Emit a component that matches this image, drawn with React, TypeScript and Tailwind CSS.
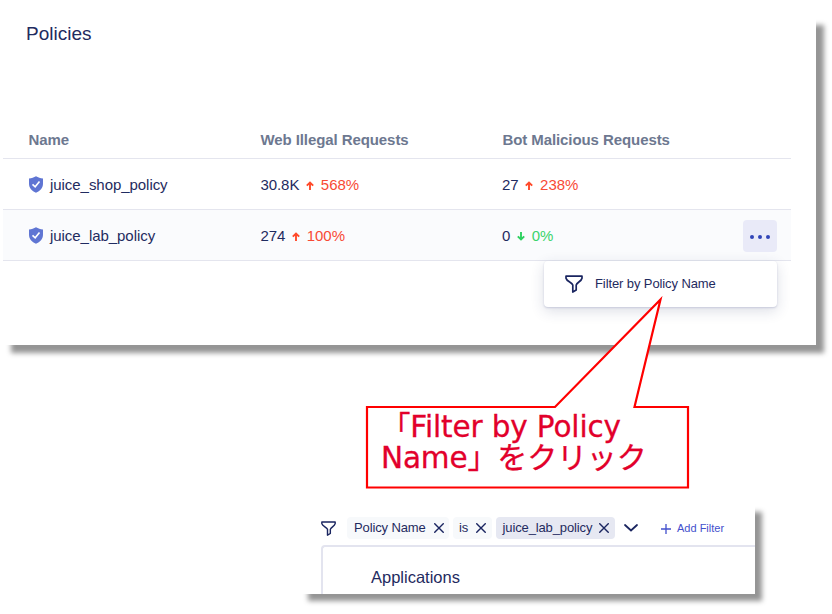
import React from "react";

function FunnelIcon({ className }: { className: string }) {
  return (
    <svg className={className} viewBox="0 0 18 18" fill="none" stroke="#1a2560" strokeWidth="1.7" strokeLinejoin="round" strokeLinecap="round">
      <path d="M1 1.2H17V3.2C16.300 6.400 12 7.400 11.200 10V15L7.800 17V10C6.800 7.400 1.700 6.400 1 3.2Z" />
    </svg>
  );
}

function ShieldIcon() {
  return (
    <svg className="mb-px h-[17px] w-4 shrink-0" viewBox="0 0 16 18">
      <path d="M8 0.3C10.3 1.7 12.5 2.4 15.4 2.6V8.3C15.4 12.9 12.3 16.1 8 17.7C3.7 16.1 0.6 12.9 0.6 8.3V2.6C3.5 2.4 5.7 1.7 8 0.3Z" fill="#5f75d3" />
      <path d="M4.3 8.8L7.1 11.4L11.7 5.8" fill="none" stroke="#fff" strokeWidth="1.7" />
    </svg>
  );
}

function Trend({ down = false, value }: { down?: boolean; value: string }) {
  return (
    <>
      <svg className={"mr-[7px] ml-[6.500px] h-[9px] w-2 shrink-0 " + (down ? "rotate-180 text-[#2ed160]" : "text-[#ff4a2b]")} viewBox="0 0 8 9" fill="none" stroke="currentColor" strokeWidth="1.9">
        <path d="M4 9V1.5M0.8 4.7L4 1.5L7.2 4.7" />
      </svg>
      <span className={down ? "text-[#3bd46b]" : "text-[#f84a35]"}>{value}</span>
    </>
  );
}

function Close({ className }: { className: string }) {
  return (
    <svg className={"h-[10px] w-[10px] shrink-0 " + className} viewBox="0 0 10 10" stroke="#1a2560" strokeWidth="1.4">
      <path d="M0.300 0.300L9.700 9.700M9.700 0.300L0.300 9.700" />
    </svg>
  );
}

const rows = [
  { name: "juice_shop_policy", web: "30.8K", webChange: "568%", bot: "27", botChange: "238%", down: false, active: false },
  { name: "juice_lab_policy", web: "274", webChange: "100%", bot: "0", botChange: "0%", down: true, active: true },
];

function Policies() {
  return (
    <section className="mt-[17px] ml-[3px] h-[328px] w-[813px] bg-white text-[#1f2b60] shadow-[8px_8px_5px_#959595]">
      <h1 className="pt-[5px] pl-[23px] text-[19px] leading-[24px]">Policies</h1>
      <div className="mt-[76px] w-[788px]">
        <div className="grid h-[37px] grid-cols-[232px_242px_1fr] border-b border-[#e4e5ee] pl-[25.400px] text-[15px] leading-[36px] font-bold tracking-[-0.08px] text-[#6d7890]">
          <span>Name</span><span>Web Illegal Requests</span><span>Bot Malicious Requests</span>
        </div>
        {rows.map((row) => (
          <div key={row.name} className={"grid h-[51px] grid-cols-[232px_242px_241px_34px] items-center border-b border-[#e4e5ee] pt-[2px] pl-[25px] text-[15px] tracking-[-0.05px] " + (row.active ? "bg-[#fafbfd]" : "bg-white")}>
            <div className="flex items-center gap-[6px]"><ShieldIcon /><span>{row.name}</span></div>
            <div className="flex items-center pl-[0.400px]"><span>{row.web}</span><Trend value={row.webChange} /></div>
            <div className="flex items-center"><span>{row.bot}</span><Trend value={row.botChange} down={row.down} /></div>
            {row.active && (
              <div className="relative">
                <button className="flex h-8 w-[34px] items-center justify-center gap-1 rounded bg-[#e9eaf8] pt-px">
                  <i className="h-1 w-1 rounded-full bg-[#3145b8]" /><i className="h-1 w-1 rounded-full bg-[#3145b8]" /><i className="h-1 w-1 rounded-full bg-[#3145b8]" />
                </button>
                <div className="absolute top-[41px] right-0 flex h-[46px] w-[233px] items-center rounded bg-white pl-[21px] shadow-[0_1px_2px_#c8cbdb,0_4px_14px_rgba(40,50,100,0.16)]">
                  <FunnelIcon className="mr-[12px] h-[18px] w-[18px]" />
                  <span className="text-[13px] tracking-[-0.1px] whitespace-nowrap">Filter by Policy Name</span>
                </div>
              </div>
            )}
          </div>
        ))}
      </div>
    </section>
  );
}

function Callout() {
  return (
    <div className="absolute top-[296px] left-[365px] h-[194px] w-[326px]">
      <svg className="absolute inset-0 h-full w-full" viewBox="0 0 326 194">
        <path d="M2 111H190L295.500 3.500L269.500 111H323V191.500H2Z" fill="#fff" stroke="#f00" strokeWidth="2.2" />
      </svg>
      <p className="relative pt-[113px] pl-4 font-['DejaVu_Sans','Noto_Sans_CJK_JP',sans-serif] text-[29.500px] leading-[31px] tracking-[-0.15px] whitespace-nowrap text-[#e2002b] [-webkit-text-stroke:0.300px_#e2002b]">
        <span className="block h-[31px]"><span className="font-['Noto_Sans_CJK_JP',sans-serif] text-[29.500px]">「</span>Filter by Policy</span>
        <span className="block h-[31px]">Name<span className="font-['Noto_Sans_CJK_JP',sans-serif] text-[30px]">」をクリック</span></span>
      </p>
    </div>
  );
}

function FilteredApplications() {
  return (
    <section className="mt-[160px] ml-[301px] flex h-[89px] w-[454px] flex-col bg-white text-[#1f2b60] shadow-[7px_7px_5px_#959595]">
      <div className="mt-[12px] flex h-[22px] items-center pl-5 text-[13px] tracking-[-0.12px]">
        <FunnelIcon className="h-[15px] w-[15px]" />
        <span className="ml-[11px] flex h-[22px] w-[102px] items-center rounded bg-[#f7f9fb] pl-[7px]">Policy Name<Close className="ml-[8px]" /></span>
        <span className="ml-1 flex h-[22px] w-[39px] items-center rounded bg-[#f7f9fb] pl-[6px]">is<Close className="ml-[8px]" /></span>
        <span className="ml-1 flex h-[22px] w-[119px] items-center rounded bg-[#e6e8f2] pl-[6.500px]">juice_lab_policy<Close className="ml-[7px]" /></span>
        <svg className="ml-[9px] h-2 w-[14px]" viewBox="0 0 14 8" fill="none" stroke="#1a2560" strokeWidth="1.8" strokeLinecap="round"><path d="M1 1L7 6.500L13 1" /></svg>
        <svg className="mt-px ml-[23px] h-[10px] w-[10px]" viewBox="0 0 10 10" stroke="#4350cd" strokeWidth="1.3"><path d="M0 5H10M5 0V10" /></svg>
        <span className="ml-[6px] text-[11px] tracking-normal text-[#4350cd]">Add Filter</span>
      </div>
      <div className="mt-[6px] ml-5 flex-1 rounded-tl-sm border-t-2 border-l-2 border-[#e3e4ef] pt-[19px] pl-[48px] text-[16.500px] leading-[22px]">Applications</div>
    </section>
  );
}

export default function App() {
  return (
    <main className="relative flow-root h-[614px] w-[832px] overflow-hidden bg-white font-['Liberation_Sans',sans-serif]">
      <Policies />
      <FilteredApplications />
      <Callout />
    </main>
  );
}
